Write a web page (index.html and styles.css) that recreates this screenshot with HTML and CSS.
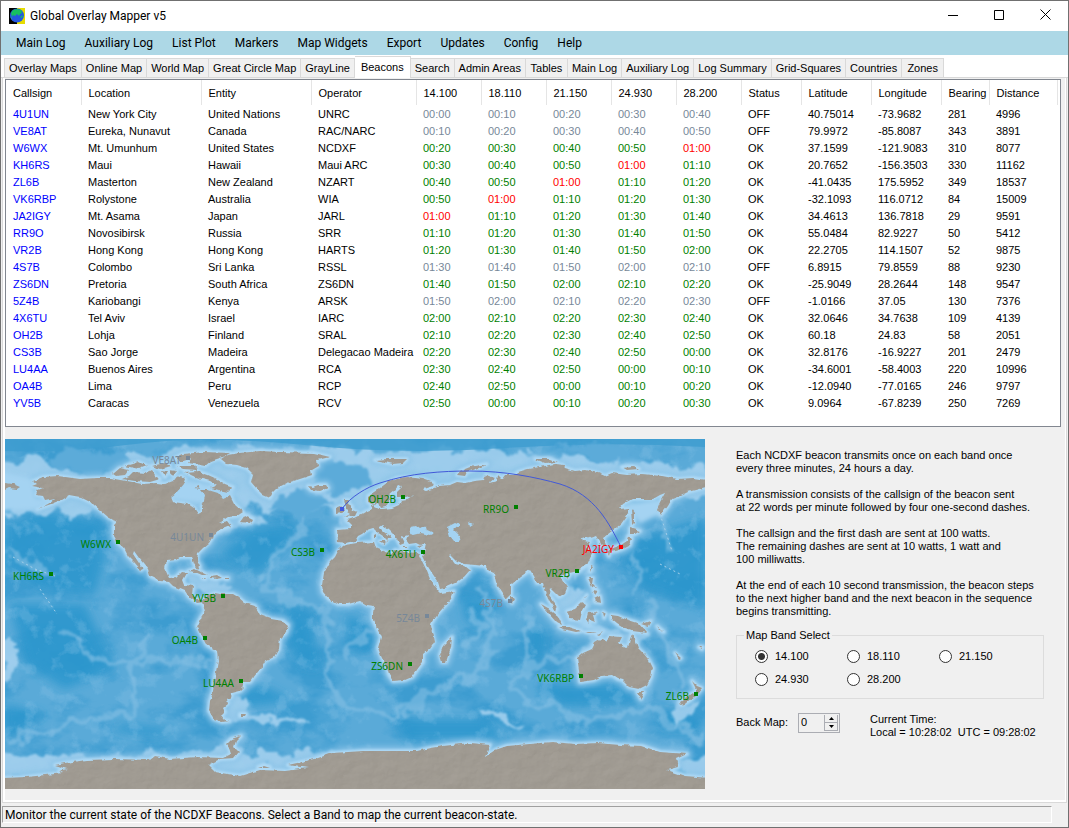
FILE: index.html
```html
<!DOCTYPE html>
<html lang="en">

<head>
    <meta charset="utf-8">
    <meta name="viewport" content="width=device-width, initial-scale=1">
    <title>Global Overlay Mapper v5</title>
    <link rel="stylesheet" href="styles.css">
</head>

<body>
    <div class="window">
        <header class="titlebar">
            <svg class="app-icon" width="16" height="16" viewBox="0 0 16 16" aria-hidden="true">
                <rect width="8" height="16" fill="#000" />
                <rect x="8" width="8" height="16" fill="#e6dc00" />
                <circle cx="8" cy="7.5" r="7" fill="#2458e0" />
                <path d="M2 5 L4 2 L8 1 L12 2 L13 5 L11 6 L10 8 L8 6 L6 8 L4 7 L3 9 Z M11 9 L14 7 L13 10 Z" fill="#17c060" />
                <path d="M1 8 L3 10 L3 12 Z" fill="#2aa5a0" />
            </svg>
            <h1>Global Overlay Mapper v5</h1>
            <div class="caption-buttons">
                <button type="button" aria-label="Minimize"><svg width="11" height="11" viewBox="0 0 11 11"><path d="M0 6.5H10" /></svg></button>
                <button type="button" aria-label="Maximize"><svg width="11" height="11" viewBox="0 0 11 11"><path d="M.5 1.5H9.5V10.5H.5Z" /></svg></button>
                <button type="button" aria-label="Close"><svg width="11" height="11" viewBox="0 0 11 11"><path d="M.5 .5L10.5 10.5M10.5 .5L.5 10.5" /></svg></button>
            </div>
        </header>

        <nav class="menubar">
            <a href="#">Main Log</a>
            <a href="#">Auxiliary Log</a>
            <a href="#">List Plot</a>
            <a href="#">Markers</a>
            <a href="#">Map Widgets</a>
            <a href="#">Export</a>
            <a href="#">Updates</a>
            <a href="#">Config</a>
            <a href="#">Help</a>
        </nav>

        <div class="tabs" role="tablist">
            <button type="button" role="tab">Overlay Maps</button>
            <button type="button" role="tab">Online Map</button>
            <button type="button" role="tab">World Map</button>
            <button type="button" role="tab">Great Circle Map</button>
            <button type="button" role="tab">GrayLine</button>
            <button type="button" role="tab" class="active" aria-selected="true">Beacons</button>
            <button type="button" role="tab">Search</button>
            <button type="button" role="tab">Admin Areas</button>
            <button type="button" role="tab">Tables</button>
            <button type="button" role="tab">Main Log</button>
            <button type="button" role="tab">Auxiliary Log</button>
            <button type="button" role="tab">Log Summary</button>
            <button type="button" role="tab">Grid-Squares</button>
            <button type="button" role="tab">Countries</button>
            <button type="button" role="tab">Zones</button>
        </div>

        <main class="page">
            <div class="list">
                <table>
                    <colgroup>
                        <col class="c-call"><col class="c-loc"><col class="c-ent"><col class="c-op">
                        <col class="c-band" span="5"><col class="c-stat"><col class="c-pos" span="2">
                        <col class="c-bear"><col class="c-dist"><col>
                    </colgroup>
                    <thead>
                        <tr>
                            <th>Callsign</th><th>Location</th><th>Entity</th><th>Operator</th>
                            <th>14.100</th><th>18.110</th><th>21.150</th><th>24.930</th><th>28.200</th>
                            <th>Status</th><th>Latitude</th><th>Longitude</th><th>Bearing</th><th>Distance</th>
                            <td></td>
                        </tr>
                    </thead>
                    <tbody id="beacons"></tbody>
                </table>
            </div>

            <div class="lower">
                <svg class="map" viewBox="0 0 700 350" role="img" aria-label="World map">
                    <defs>
                        <filter id="blur1" x="-10%" y="-10%" width="120%" height="120%"><feGaussianBlur stdDeviation="1" /></filter>
                        <filter id="blur2" x="-10%" y="-10%" width="120%" height="120%"><feGaussianBlur stdDeviation="2" /></filter>
                        <filter id="blur5" x="-20%" y="-20%" width="140%" height="140%"><feGaussianBlur stdDeviation="5" /></filter>
                        <filter id="depth" x="0" y="0" width="100%" height="100%" color-interpolation-filters="sRGB">
                            <feTurbulence type="fractalNoise" baseFrequency=".018 .03" numOctaves="5" seed="8" />
                            <feColorMatrix values="0 0 0 0 .17  0 0 0 0 .58  0 0 0 0 .8  4 0 0 0 -1.8" />
                        </filter>
                        <filter id="shoal" x="0" y="0" width="100%" height="100%" color-interpolation-filters="sRGB">
                            <feTurbulence type="fractalNoise" baseFrequency=".06" numOctaves="5" seed="21" />
                            <feColorMatrix values="0 0 0 0 .55  0 0 0 0 .77  0 0 0 0 .91  0 5 0 0 -2.7" />
                        </filter>
                        <filter id="relief" x="0" y="0" width="100%" height="100%" color-interpolation-filters="sRGB">
                            <feTurbulence type="fractalNoise" baseFrequency=".06 .08" numOctaves="4" seed="4" result="n" />
                            <feDiffuseLighting in="n" surfaceScale="1" lighting-color="#fff" result="l"><feDistantLight azimuth="225" elevation="55" /></feDiffuseLighting>
                            <feColorMatrix in="l" values=".16 0 0 0 .495  .16 0 0 0 .475  .16 0 0 0 .442  0 0 0 0 1" />
                            <feComposite in2="SourceGraphic" operator="in" />
                        </filter>
                        <filter id="rough" x="0" y="0" width="100%" height="100%" color-interpolation-filters="sRGB">
                            <feTurbulence type="fractalNoise" baseFrequency=".16" numOctaves="2" seed="3" />
                            <feDisplacementMap in="SourceGraphic" scale="4" xChannelSelector="R" yChannelSelector="G" />
                        </filter>
                        <filter id="meander" x="-5%" y="-5%" width="110%" height="110%" color-interpolation-filters="sRGB">
                            <feTurbulence type="fractalNoise" baseFrequency=".05" numOctaves="4" seed="12" />
                            <feDisplacementMap in="SourceGraphic" scale="26" xChannelSelector="R" yChannelSelector="G" />
                            <feGaussianBlur stdDeviation="1" />
                        </filter>
                        <g id="land">
                            <!-- North America -->
                            <path d="M27 47 L32 45 L28 42 L38 38 L53 37 L75 40 L92 39 L105 39 L122 42 L138 45 L152 44 L160 45 L168 42 L176 37 L180 40 L178 46 L172 53 L166 58 L168 63 L183 65 L189 69 L193 75 L197 73 L197 68 L199 62 L200 56 L196 51 L203 51 L213 54 L218 60 L225 57 L229 65 L238 73 L232 77 L222 78 L213 84 L222 82 L226 87 L216 91 L208 95 L207 99 L204 104 L198 109 L193 114 L192 121 L195 128 L193 131 L189 125 L187 118 L175 118 L171 120 L162 121 L160 130 L164 139 L171 138 L176 133 L182 134 L178 141 L180 146 L188 147 L187 156 L192 161 L198 160 L200 163 L192 164 L184 158 L180 152 L168 147 L164 143 L155 142 L145 137 L143 130 L134 119 L129 112 L128 115 L138 130 L136 131 L129 123 L123 117 L119 109 L113 104 L109 97 L109 86 L112 83 L103 78 L96 72 L87 64 L75 58 L64 56 L56 61 L46 65 L32 70 L43 65 L50 59 L40 61 L38 57 L31 56 L33 51 L38 49 Z" />
                            <path d="M108 35 L115 29 L124 31 L120 36 L111 37 Z M117 40 L124 37 L128 33 L140 34 L146 31 L150 37 L155 40 L145 43 L130 42 Z M120 27 L134 23 L142 27 L134 30 Z M146 27 L160 24 L165 27 L155 30 Z M156 32 L163 33 L160 38 Z M164 31 L172 32 L168 37 Z M172 27 L190 27 L192 31 L178 30 Z" />
                            <path d="M170 19 L178 15 L200 13 L225 14 L218 18 L206 22 L200 27 L190 25 L183 24 L186 20 L176 23 Z M180 33 L192 32 L203 36 L212 40 L220 45 L228 48 L223 53 L214 51 L205 49 L212 46 L205 42 L197 40 L188 37 Z M189 49 L194 47 L196 50 Z M235 83 L240 76 L248 80 L246 84 Z M106 79 L112 84 L108 81 Z" />
                            <path d="M0 44 L8 45 L15 48 L12 50 L4 49 L0 51 Z" />
                            <!-- Greenland, Iceland -->
                            <path d="M222 16 L235 14 L255 12 L275 13 L308 14 L325 18 L312 21 L313 27 L306 31 L307 36 L295 40 L282 44 L272 49 L268 53 L265 59 L258 56 L252 50 L246 43 L248 35 L242 29 L232 26 L222 25 L216 20 Z M303 47 L308 48 L313 46 L321 46 L323 49 L315 52 L306 51 Z" />
                            <!-- Caribbean -->
                            <path d="M183 132 L190 130 L202 136 L197 136 L190 133 Z M206 137 L212 136 L217 139 L211 140 L206 139 Z M197 139 L201 139 L200 140 Z M220 139 L223 139 L223 140 L220 140 Z" />
                            <!-- South America -->
                            <path d="M197 163 L202 157 L210 154 L215 155 L228 155 L233 158 L240 164 L250 167 L253 172 L255 176 L266 180 L278 182 L283 186 L281 193 L275 199 L274 210 L270 217 L260 222 L256 229 L248 239 L245 243 L237 243 L239 248 L235 252 L227 254 L226 258 L222 260 L223 265 L218 269 L220 273 L216 277 L219 281 L224 282 L217 283 L209 280 L204 272 L205 262 L208 252 L210 238 L213 222 L212 212 L202 206 L196 195 L192 187 L195 180 L200 172 Z M235 275 L241 275 L240 277 L235 277 Z" />
                            <!-- Europe and Asia -->
                            <path d="M332 91 L333 103 L340 104 L350 102 L353 97 L357 95 L362 91 L368 89 L372 93 L378 97 L382 101 L380 104 L382 102 L383 99 L387 99 L379 93 L374 88 L377 86 L384 91 L388 95 L392 100 L395 106 L400 104 L397 98 L403 96 L401 101 L404 105 L411 104 L415 106 L421 104 L420 110 L417 117 L420 123 L427 134 L433 143 L435 150 L440 149 L451 144 L459 138 L465 131 L460 127 L450 125 L444 117 L445 115 L452 122 L460 125 L470 126 L480 127 L484 132 L489 134 L491 143 L495 151 L501 160 L506 155 L506 146 L515 138 L525 131 L529 137 L532 144 L538 144 L541 153 L544 162 L551 173 L552 170 L548 161 L544 156 L545 149 L550 154 L554 158 L560 154 L562 149 L557 141 L555 137 L560 135 L573 132 L582 126 L587 115 L582 108 L585 103 L578 102 L577 99 L583 97 L586 99 L591 97 L594 102 L595 107 L601 106 L598 99 L607 92 L616 85 L621 78 L624 73 L624 69 L614 70 L618 65 L627 60 L640 60 L648 60 L655 56 L660 54 L655 63 L652 70 L656 76 L663 67 L667 60 L675 57 L683 53 L694 50 L702 48 L702 41 L688 39 L673 40 L657 37 L637 35 L622 36 L607 34 L600 37 L593 34 L580 31 L570 32 L560 29 L558 26 L550 25 L540 27 L523 30 L513 33 L510 36 L500 36 L497 40 L493 36 L492 42 L484 44 L490 39 L481 36 L479 41 L470 42 L460 44 L452 43 L445 46 L434 47 L430 49 L420 52 L418 50 L428 47 L429 44 L418 40 L402 38 L392 39 L383 43 L375 49 L363 57 L363 63 L368 65 L373 63 L376 69 L381 68 L384 62 L383 57 L389 52 L393 47 L397 48 L392 53 L392 58 L400 58 L408 57 L402 61 L396 62 L394 66 L387 69 L378 70 L373 70 L369 68 L371 65 L366 66 L367 70 L360 73 L353 77 L347 80 L341 81 L346 86 L346 90 Z" />
                            <path d="M339 61 L344 61 L343 65 L347 67 L347 71 L352 73 L350 77 L340 78 L345 75 L342 73 L344 70 L341 69 Z M331 69 L336 67 L339 70 L337 74 L331 75 Z M370 21 L382 20 L402 20 L398 24 L388 25 L380 23 Z M452 36 L455 32 L465 28 L482 25 L474 29 L462 33 L460 37 Z M530 20 L545 20 L552 23 L540 24 Z M617 28 L628 27 L634 30 L622 31 Z M368 95 L370 94 L370 99 L368 99 Z M374 102 L380 102 L379 105 Z M396 108 L402 108 L402 109 L396 109 Z M413 107 L418 106 L416 109 Z" />
                            <path d="M626 70 L629 74 L629 84 L627 86 Z M625 89 L635 92 L630 95 L625 95 Z M623 97 L627 99 L625 106 L617 110 L611 112 L605 113 L604 117 L602 113 L607 109 L616 106 L622 102 Z M585 127 L587 128 L585 133 Z M561 137 L565 136 L563 139 Z M505 157 L509 160 L507 164 L505 161 Z M583 139 L588 139 L587 145 L591 149 L587 148 Z M589 160 L595 157 L596 164 L590 163 Z M578 161 L582 156 L580 159 Z M588 151 L593 152 L590 156 Z" />
                            <!-- Africa, Madagascar -->
                            <path d="M340 106 L352 104 L369 103 L371 109 L380 113 L387 115 L390 111 L399 113 L413 114 L416 120 L421 130 L425 140 L433 151 L436 154 L449 152 L446 160 L438 169 L431 177 L426 185 L427 193 L429 203 L425 209 L418 215 L418 223 L414 228 L407 238 L400 241 L388 242 L384 236 L382 229 L376 217 L373 209 L376 198 L372 189 L368 181 L368 173 L369 167 L362 166 L355 162 L343 165 L333 165 L324 160 L318 153 L317 146 L319 134 L325 123 L330 118 L333 112 L338 107 Z M447 198 L446 208 L441 223 L437 223 L435 216 L438 207 Z" />
                            <!-- Indonesia, New Guinea -->
                            <path d="M536 165 L543 169 L553 177 L557 186 L551 183 L544 175 Z M554 188 L564 188 L577 192 L571 193 L558 190 Z M562 172 L569 170 L576 163 L581 166 L577 173 L575 181 L565 180 Z M583 174 L593 173 L588 176 L590 183 L585 181 L584 186 L581 181 Z M598 173 L601 175 L599 179 Z M580 193 L592 193 L585 194 Z M591 196 L598 192 L593 197 Z M606 176 L613 177 L620 180 L633 184 L642 194 L635 193 L627 192 L620 190 L612 185 L606 180 Z M637 185 L646 182 L643 187 Z M652 187 L659 193 L655 191 Z M670 214 L676 219 L674 220 Z M694 208 L698 208 L697 210 Z" />
                            <!-- Australia, New Zealand -->
                            <path d="M572 219 L578 214 L587 210 L590 204 L597 200 L601 203 L605 197 L616 198 L613 204 L623 209 L625 200 L627 195 L630 200 L633 209 L639 215 L644 221 L648 229 L646 238 L642 246 L634 250 L624 248 L617 241 L613 240 L607 236 L597 237 L589 241 L575 243 L574 232 Z M632 253 L639 253 L636 260 Z M687 242 L692 247 L697 249 L692 255 L690 254 L691 250 Z M688 254 L690 257 L683 263 L676 266 L675 263 Z" />
                            <!-- Antarctica -->
                            <path d="M-5 339 L22 338 L58 334 L54 332 L63 330 L50 326 L60 324 L82 321 L110 320 L145 321 L150 317 L165 320 L192 318 L218 319 L226 315 L224 309 L221 305 L226 300 L236 297 L231 302 L229 308 L234 313 L229 319 L215 320 L203 326 L210 333 L235 337 L255 331 L280 332 L303 329 L283 326 L310 320 L328 314 L358 312 L385 312 L412 312 L425 309 L438 307 L465 304 L485 306 L480 318 L490 311 L502 307 L547 303 L570 305 L593 304 L615 306 L637 307 L655 313 L682 315 L671 320 L673 328 L662 331 L680 337 L705 339 L705 360 L-5 360 Z M253 328 L259 326 L265 328 Z" />
                        </g>
                    </defs>

                    <rect width="700" height="350" fill="#5aaad8" />
                    <rect width="700" height="350" filter="url(#depth)" opacity=".6" />
                    <g class="deep" filter="url(#blur5)">
                        <path d="M0 85 L40 72 L95 84 L100 120 L90 155 L40 150 L0 130 Z M5 165 L80 165 L110 230 L60 250 L20 225 Z M245 90 L290 85 L285 105 L255 135 L240 130 L215 115 Z M280 160 L305 175 L315 230 L300 230 L285 205 Z M340 175 L365 185 L365 215 L345 205 Z M235 255 L255 245 L290 262 L235 268 Z M632 100 L700 78 L700 170 L635 145 L620 125 Z M530 245 L610 245 L635 262 L560 268 Z M390 280 L480 280 L500 300 L400 300 Z M456 155 L485 165 L475 190 L460 180 Z M115 285 L170 290 L150 298 L110 292 Z M525 185 L540 195 L535 220 L525 215 Z M0 265 L40 275 L0 300 Z M650 270 L690 278 L700 290 L660 290 Z" />
                    </g>
                    <rect width="700" height="350" filter="url(#shoal)" opacity=".3" />
                    <g class="ridges" filter="url(#meander)">
                        <path d="M295 75 L297 95 L270 115 L261 135 L264 150 L290 163 L315 165 L325 190 L323 225 L325 250 L340 270 L390 275 L425 250 L470 235 L485 215 L483 165 L475 150" />
                        <path d="M0 300 L50 290 L90 280 L125 275 L135 220 L145 190" />
                        <path d="M425 250 L400 280 M500 250 L530 225 L540 220 L600 222 M340 220 L365 195 M500 250 L570 280 L640 270 L700 300 M460 170 L475 185 L460 210 M522 175 L521 235" />
                        <path d="M0 110 L25 125 L50 135 M60 190 L90 220 L120 225 L200 220 M625 112 L635 130 L628 155 M655 75 L665 110 M640 165 L660 205 L680 250" />
                    </g>
                    <g class="shelf" filter="url(#meander)">
                        <path d="M-10 25 L30 18 L80 36 L110 35 L115 20 L180 8 L330 8 L380 12 L450 12 L520 14 L580 18 L640 22 L710 28 L710 55 L-10 76 Z" />
                        <path d="M205 65 L250 76 L262 84 L240 92 L205 95 Z M240 40 L300 35 L345 60 L350 80 L300 60 L255 75 Z M225 252 L240 260 L235 283 L210 285 Z M235 273 L300 280 L300 286 L235 280 Z M545 150 L590 160 L590 190 L555 190 Z M590 192 L640 194 L640 215 L575 215 Z M-10 315 L120 318 L210 310 L265 318 L330 310 L300 332 L230 345 L-10 340 Z M660 325 L710 315 L710 340 L662 335 Z M672 265 L690 263 L685 278 L668 283 Z M475 265 L500 273 L515 290 L490 280 Z" />
                        <path d="M330 60 L375 60 L400 70 L350 85 L330 82 Z M590 92 L590 125 L570 140 L590 90 Z M190 125 L230 150 L185 150 Z M-5 200 L13 203 L5 240 L-5 245 Z" />
                    </g>
                    <path d="M0 0 H700 V8 Q600 2 500 9 T300 6 T130 5 T0 12 Z" fill="#3d9ccf" opacity=".8" />
                    <path d="M50 14 L130 15 L112 33 L85 34 L55 24 Z M305 20 L355 25 L370 45 L330 57 L310 40 Z M550 5 L625 8 L640 25 L600 23 Z M265 65 L300 50 L325 62 L290 80 Z" fill="#5cabd9" filter="url(#meander)" />

                    <use href="#land" class="coast-outer" filter="url(#blur2)" />
                    <use href="#land" class="coast" filter="url(#blur1)" />
                    <path class="inner-sea" filter="url(#blur2)" d="M27 40 L-5 32 V72 L32 70 L55 58 L30 60 Z M568 173 L590 186 L610 195 L580 190 Z M166 40 L230 50 L225 66 L160 60 Z M620 65 L655 60 L655 75 L635 85 Z" />
                    <g filter="url(#rough)">
                        <g filter="url(#relief)"><use href="#land" class="land" /></g>
                        <path class="inner-sea" d="M404 95 L406 88 L411 87 L415 90 L421 87 L422 91 L429 94 L425 96 L416 94 L408 96 Z M442 88 L450 84 L455 86 L449 91 L454 96 L456 103 L449 103 L445 98 Z M464 84 L468 86 L465 88 Z" />
                    </g>
                    <path class="islands" d="M30 131 L36 132 M8 118 L30 130 L50 137 M35 150 L52 175 M655 75 L667 112 M655 125 L675 135" />

                    <path class="path-line" d="M337 70 C345 58 362 48 375 44 C405 34 437 32 465 32 C500 32 530 38 555 45 C590 56 604 84 616 108" />
                    <rect class="home" x="335" y="68" width="4" height="4" />
                    <g id="markers"></g>
                </svg>

                <section class="info">
                    <p>Each NCDXF beacon transmits once on each band once<br>every three minutes, 24 hours a day.</p>
                    <p>A transmission consists of the callsign of the beacon sent<br>at 22 words per minute followed by four one-second dashes.</p>
                    <p>The callsign and the first dash are sent at 100 watts.<br>The remaining dashes are sent at 10 watts, 1 watt and<br>100 milliwatts.</p>
                    <p>At the end of each 10 second transmission, the beacon steps<br>to the next higher band and the next beacon in the sequence<br>begins transmitting.</p>

                    <fieldset class="bands">
                        <legend>Map Band Select</legend>
                        <label><input type="radio" name="band" checked>14.100</label>
                        <label><input type="radio" name="band">18.110</label>
                        <label><input type="radio" name="band">21.150</label>
                        <label><input type="radio" name="band">24.930</label>
                        <label><input type="radio" name="band">28.200</label>
                    </fieldset>

                    <div class="settings">
                        <label for="backMap">Back Map:</label>
                        <div class="spinner">
                            <input type="text" id="backMap" inputmode="numeric" value="0">
                            <div class="spin-buttons">
                                <button type="button" aria-label="Up"><svg width="5" height="3" viewBox="0 0 5 3"><path d="M0 3L2.5 0L5 3Z" /></svg></button>
                                <button type="button" aria-label="Down"><svg width="5" height="3" viewBox="0 0 5 3"><path d="M0 0L2.5 3L5 0Z" /></svg></button>
                            </div>
                        </div>
                        <div class="clock">Current Time:<br>Local = 10:28:02&nbsp; UTC = 09:28:02</div>
                    </div>
                </section>
            </div>
        </main>

        <footer class="statusbar"><span>Monitor the current state of the NCDXF Beacons. Select a Band to map the current beacon-state.</span></footer>
    </div>
    <script src="beacons.js"></script>
</body>

</html>
```
FILE: styles.css
```css
* {
    box-sizing: border-box;
}

body {
    margin: 0;
    font: 11px/13px "Liberation Sans", Arial, sans-serif;
    color: #000;
}

button,
input {
    font: inherit;
    color: inherit;
}

.window {
    display: flex;
    flex-direction: column;
    min-height: 100vh;
    border: 1px solid #707070;
    background: #f0f0f0;
}

/* title bar */
.titlebar {
    display: flex;
    align-items: center;
    height: 30px;
    padding-left: 8px;
    background: #fff;
}

.titlebar h1 {
    flex: 1;
    margin: 0 0 0 5px;
    font: 12px/16px Roboto, "Noto Sans", sans-serif;
}

.caption-buttons {
    display: flex;
}

.caption-buttons button {
    width: 46px;
    height: 29px;
    padding: 0;
    border: 0;
    background: none;
}

.caption-buttons svg {
    fill: none;
    stroke: #000;
}

/* menu */
.menubar {
    display: flex;
    align-items: center;
    gap: 19px;
    height: 24px;
    padding-left: 15px;
    background: #add8e6;
    font: 12px/16px Roboto, "Noto Sans", sans-serif;
}

.menubar a {
    color: #000;
    text-decoration: none;
}

/* tabs */
.tabs {
    display: flex;
    align-items: flex-end;
    height: 23px;
    padding: 0 3px;
    background: #fff;
    border-bottom: 1px solid #d9d9d9;
}

.tabs button {
    min-width: 42px;
    height: 19px;
    padding: 1px 4px 0;
    border: 1px solid #d9d9d9;
    border-width: 1px 1px 0 0;
    background: #f0f0f0;
    white-space: nowrap;
}

.tabs button:first-child {
    border-left-width: 1px;
}

.tabs .active {
    height: 22px;
    margin-bottom: -1px;
    padding: 0 6px 1px;
    background: #fff;
}

/* page */
.page {
    flex: 1;
    margin: 0 1px 0 1px;
    padding: 1px 4px 10px 2px;
    border: 1px solid #d9d9d9;
    border-top: 0;
    box-shadow: inset -1px -2px #fff, inset 2px 0 #fff;
}

.list {
    height: 348px;
    margin-right: 1px;
    border: 1px solid #828790;
    background: #fff;
    overflow: auto;
}

.list table {
    width: 100%;
    table-layout: fixed;
    border-collapse: collapse;
}

.list th,
.list td {
    height: 17px;
    padding: 1px 0 0 7px;
    font-weight: normal;
    text-align: left;
    white-space: nowrap;
}

.list th {
    height: 25px;
    border-right: 1px solid #e5e5e5;
}

.c-call { width: 75px; }
.c-loc { width: 120px; }
.c-ent { width: 110px; }
.c-op { width: 105px; }
.c-band { width: 65px; }
.c-stat { width: 60px; }
.c-pos { width: 70px; }
.c-bear { width: 48px; }
.c-dist { width: 68px; }

.call { color: #0000ff; }
.on { color: #008000; fill: #008000; }
.off { color: #778899; fill: #778899; }
.now { color: #ff0000; fill: #ff0000; }

.lower {
    display: flex;
    align-items: flex-start;
    gap: 31px;
    margin-top: 12px;
}

/* map */
.map {
    display: block;
    flex: 0 1 700px;
    min-width: 0;
    overflow: hidden;
}

.deep { fill: #2c96cd; opacity: .85; }

.ridges {
    fill: none;
    stroke: #86c0e4;
    stroke-width: 6;
    opacity: .6;
}

.shelf { fill: #a8d3f0; opacity: .85; }

.coast-outer {
    fill: #8cc4e8;
    stroke: #8cc4e8;
    stroke-width: 11;
    stroke-linejoin: round;
    opacity: .7;
}

.coast {
    fill: #aed9f5;
    stroke: #aed9f5;
    stroke-width: 4;
    stroke-linejoin: round;
}

.land { fill: #9f9a92; }
.inner-sea { fill: #a4d3f2; }

.islands {
    fill: none;
    stroke: #a5d0ea;
    stroke-width: 1;
    stroke-dasharray: 2 3;
}

.path-line {
    fill: none;
    stroke: #4159d8;
}

.home { fill: #4159e1; }

.map text {
    font: 10px "Noto Sans", Verdana, sans-serif;
    text-anchor: end;
}

/* beacon notes and controls */
.info {
    flex: 1 0 308px;
    padding-top: 10px;
    margin-right: 18px;
}

.info p {
    margin: 0 0 13px;
    white-space: nowrap;
}

.bands {
    display: grid;
    grid-template-columns: repeat(3, 92px);
    row-gap: 10px;
    margin: -2px 0 0;
    padding: 8px 0 12px 18px;
    border: 1px solid #dcdcdc;
}

.bands legend {
    margin-left: -11px;
    padding: 0 2px;
}

.bands label {
    display: flex;
    align-items: center;
    gap: 7px;
}

.bands input {
    appearance: none;
    width: 13px;
    height: 13px;
    margin: 0;
    border: 1px solid #333;
    border-radius: 50%;
    background: #fff;
}

.bands input:checked {
    background: radial-gradient(circle, #333 3px, #fff 4px);
}

.settings {
    display: flex;
    align-items: flex-start;
    margin-top: 14px;
}

.settings > label {
    width: 62px;
    padding-top: 3px;
}

.spinner {
    display: flex;
    width: 42px;
    height: 20px;
    padding: 1px;
    border: 1px solid #abadb3;
}

.spinner input {
    width: 24px;
    padding: 0 1px 2px;
    border: 0;
    background: none;
}

.spin-buttons {
    display: flex;
    flex-direction: column;
    width: 14px;
}

.spin-buttons button {
    display: flex;
    flex: 1;
    align-items: center;
    justify-content: center;
    padding: 0;
    border: 1px solid #abadb3;
    border-width: 0 1px 1px;
    background: #f0f0f0;
}

.clock {
    margin-left: 30px;
    white-space: nowrap;
}

/* status bar */
.statusbar {
    padding: 3px 16px 4px 1px;
    font: 12px/14px Roboto, "Noto Sans", sans-serif;
}

.statusbar span {
    display: block;
    padding: 1px 0 0 2px;
    border: 1px solid #a0a0a0;
    border-right-color: #fff;
    border-bottom-color: #fff;
}
```
FILE: beacons.js
```js
// callsign, location, entity, operator, status, latitude, longitude, bearing, distance
var beacons = [
    ["4U1UN", "New York City", "United Nations", "UNRC", "OFF", "40.75014", "-73.9682", "281", "4996"],
    ["VE8AT", "Eureka, Nunavut", "Canada", "RAC/NARC", "OFF", "79.9972", "-85.8087", "343", "3891"],
    ["W6WX", "Mt. Umunhum", "United States", "NCDXF", "OK", "37.1599", "-121.9083", "310", "8077"],
    ["KH6RS", "Maui", "Hawaii", "Maui ARC", "OK", "20.7652", "-156.3503", "330", "11162"],
    ["ZL6B", "Masterton", "New Zealand", "NZART", "OK", "-41.0435", "175.5952", "349", "18537"],
    ["VK6RBP", "Rolystone", "Australia", "WIA", "OK", "-32.1093", "116.0712", "84", "15009"],
    ["JA2IGY", "Mt. Asama", "Japan", "JARL", "OK", "34.4613", "136.7818", "29", "9591"],
    ["RR9O", "Novosibirsk", "Russia", "SRR", "OK", "55.0484", "82.9227", "50", "5412"],
    ["VR2B", "Hong Kong", "Hong Kong", "HARTS", "OK", "22.2705", "114.1507", "52", "9875"],
    ["4S7B", "Colombo", "Sri Lanka", "RSSL", "OFF", "6.8915", "79.8559", "88", "9230"],
    ["ZS6DN", "Pretoria", "South Africa", "ZS6DN", "OK", "-25.9049", "28.2644", "148", "9547"],
    ["5Z4B", "Kariobangi", "Kenya", "ARSK", "OFF", "-1.0166", "37.05", "130", "7376"],
    ["4X6TU", "Tel Aviv", "Israel", "IARC", "OK", "32.0646", "34.7638", "109", "4139"],
    ["OH2B", "Lohja", "Finland", "SRAL", "OK", "60.18", "24.83", "58", "2051"],
    ["CS3B", "Sao Jorge", "Madeira", "Delegacao Madeira", "OK", "32.8176", "-16.9227", "201", "2479"],
    ["LU4AA", "Buenos Aires", "Argentina", "RCA", "OK", "-34.6001", "-58.4003", "220", "10996"],
    ["OA4B", "Lima", "Peru", "RCP", "OK", "-12.0940", "-77.0165", "246", "9797"],
    ["YV5B", "Caracas", "Venezuela", "RCV", "OK", "9.0964", "-67.8239", "250", "7269"]
];

var currentSlot = 60;
var selectedBand = 0;
var NS = "http://www.w3.org/2000/svg";

// each beacon moves up one band every 10 seconds, 3 minute cycle
function slot(row, band) {
    return ((row + band) * 10) % 180;
}

function slotClass(beacon, secs) {
    if (beacon[4] == "OFF") return "off";
    return secs == currentSlot ? "now" : "on";
}

function slotText(secs) {
    return "0" + Math.floor(secs / 60) + ":" + ("0" + secs % 60).slice(-2);
}

function addCell(tr, text, cls) {
    var td = tr.insertCell();
    td.textContent = text;
    if (cls) td.className = cls;
}

function addMarker(beacon, cls) {
    var x = Math.round((Number(beacon[6]) + 180) * 700 / 360);
    var y = Math.round((90 - Number(beacon[5])) * 350 / 180);
    var dot = document.createElementNS(NS, "rect");
    dot.setAttribute("x", x - 2);
    dot.setAttribute("y", y - 2);
    dot.setAttribute("width", 4);
    dot.setAttribute("height", 4);
    dot.setAttribute("class", cls);
    var label = document.createElementNS(NS, "text");
    label.setAttribute("x", x - 7);
    label.setAttribute("y", y + 6);
    label.setAttribute("class", cls);
    label.textContent = beacon[0];
    document.getElementById("markers").append(dot, label);
}

beacons.forEach(function (b, row) {
    var tr = document.getElementById("beacons").insertRow();
    addCell(tr, b[0], "call");
    addCell(tr, b[1]);
    addCell(tr, b[2]);
    addCell(tr, b[3]);
    for (var band = 0; band < 5; band++) {
        addCell(tr, slotText(slot(row, band)), slotClass(b, slot(row, band)));
    }
    for (var i = 4; i < 9; i++) addCell(tr, b[i]);
    addMarker(b, slotClass(b, slot(row, selectedBand)));
});
```
